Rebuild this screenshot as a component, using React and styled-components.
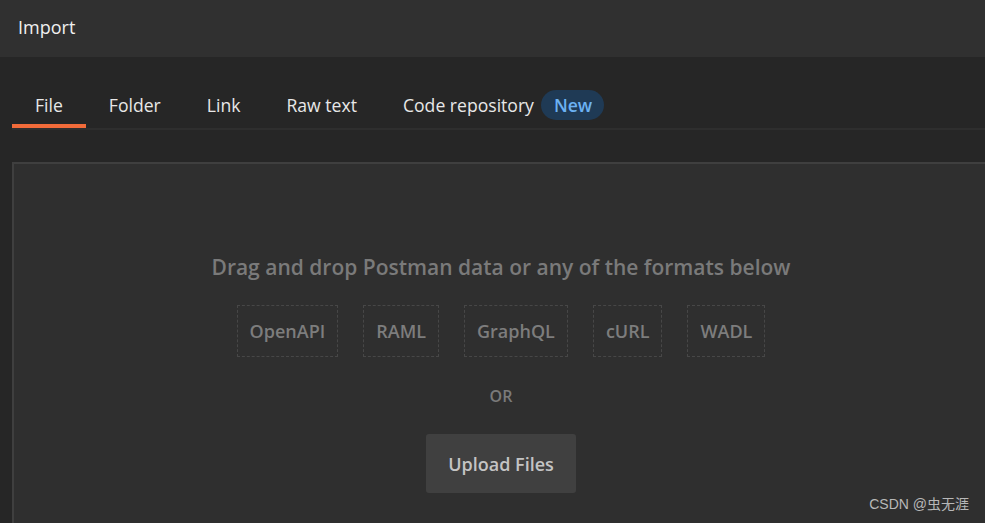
import React from "react";
import styled, { createGlobalStyle } from "styled-components";

const GlobalStyle = createGlobalStyle`
  html, body {
    margin: 0;
    padding: 0;
    background: #262626;
    overflow: hidden;
  }
  body {
    font-family: "Open Sans", "Noto Sans", "Noto Sans CJK SC", sans-serif;
  }
`;

const TABS = ["File", "Folder", "Link", "Raw text", "Code repository"];
const FORMATS = ["OpenAPI", "RAML", "GraphQL", "cURL", "WADL"];

const App = () => {
  return (
    <Page>
      <GlobalStyle />
      <Header>
        <HeaderTitle>Import</HeaderTitle>
      </Header>
      <Body>
        <TabList>
          {TABS.map((tab, i) => (
            <Tab key={tab} active={i === 0}>
              {tab}
              {tab === "Code repository" && <Badge>New</Badge>}
            </Tab>
          ))}
        </TabList>
        <DropZone>
          <DropTitle>Drag and drop Postman data or any of the formats below</DropTitle>
          <FormatRow>
            {FORMATS.map((f) => (
              <FormatBox key={f}>{f}</FormatBox>
            ))}
          </FormatRow>
          <Or>OR</Or>
          <UploadButton>Upload Files</UploadButton>
        </DropZone>
      </Body>
      <Watermark>CSDN @虫无涯</Watermark>
    </Page>
  );
};

export const Page = styled.div`
  width: 985px;
  height: 523px;
  position: relative;
  overflow: hidden;
  background: #262626;
`;

export const Header = styled.div`
  height: 57px;
  background: #303030;
  display: flex;
  align-items: center;
  padding: 0 18px;
  box-sizing: border-box;
`;

export const HeaderTitle = styled.div`
  color: #f0f0f0;
  font-size: 18px;
  line-height: 24px;
  margin-top: -4px;
`;

export const Body = styled.div`
  padding: 0 0 0 12px;
`;

export const TabList = styled.div`
  display: flex;
  margin-top: 36px;
  border-bottom: 2px solid #2e2e2e;
`;

export const Tab = styled.div`
  display: flex;
  align-items: center;
  height: 24px;
  padding: 0 23px 7px;
  font-size: 17.6px;
  line-height: 24px;
  color: #e8e8e8;
  border-bottom: 4px solid ${(p) => (p.active ? "#f26b3a" : "transparent")};
  white-space: nowrap;
`;

export const Badge = styled.span`
  display: inline-flex;
  align-items: center;
  justify-content: center;
  height: 30px;
  padding: 0 12px 0 13px;
  margin-left: 7px;
  border-radius: 15px;
  background: #1f3a55;
  color: #6cb1f2;
  font-size: 17.6px;
  font-weight: 600;
`;

export const DropZone = styled.div`
  margin-top: 32px;
  width: 978px;
  height: 400px;
  box-sizing: border-box;
  border: 2px solid #3f3f3f;
  background: #2f2f2f;
  display: flex;
  flex-direction: column;
  align-items: center;
  padding-top: 89px;
`;

export const DropTitle = styled.div`
  font-size: 21px;
  line-height: 28px;
  font-weight: 600;
  color: #7a7a7a;
`;

export const FormatRow = styled.div`
  display: flex;
  gap: 25px;
  margin-top: 24px;
`;

export const FormatBox = styled.div`
  height: 52px;
  box-sizing: border-box;
  padding: 0 12px;
  display: flex;
  align-items: center;
  border: 1px dashed #474747;
  color: #7d7d7d;
  font-size: 18px;
  font-weight: 600;
`;

export const Or = styled.div`
  margin-top: 29px;
  font-size: 16px;
  line-height: 20px;
  font-weight: 600;
  color: #7a7a7a;
`;

export const UploadButton = styled.div`
  margin-top: 28px;
  width: 150px;
  height: 59px;
  border-radius: 3px;
  background: #404040;
  color: #c4c4c4;
  font-size: 18px;
  font-weight: 600;
  display: flex;
  align-items: center;
  justify-content: center;
`;

export const Watermark = styled.div`
  position: absolute;
  right: 16px;
  bottom: 10px;
  font-family: "Liberation Sans", "Noto Sans CJK SC", sans-serif;
  font-size: 14px;
  color: #b8b8b8;
`;

export default App;
